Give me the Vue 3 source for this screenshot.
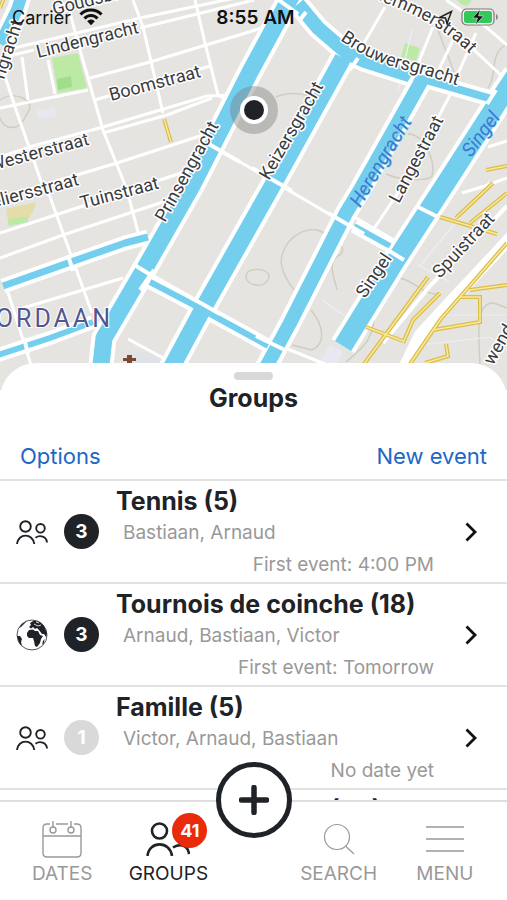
<script setup>
import { ref } from 'vue'

const activeTab = ref('groups')

const groups = [
  { id: 1, icon: 'people', count: 3, name: 'Tennis (5)', members: 'Bastiaan, Arnaud', next: 'First event: 4:00 PM' },
  { id: 2, icon: 'globe', count: 3, name: 'Tournois de coinche (18)', members: 'Arnaud, Bastiaan, Victor', next: 'First event: Tomorrow' },
  { id: 3, icon: 'people', count: 1, muted: true, name: 'Famille (5)', members: 'Victor, Arnaud, Bastiaan', next: 'No date yet' },
  { id: 4, icon: 'people', count: 1, muted: true, name: 'vacances en mer (24)', members: 'Victor, Bastiaan', next: 'No date yet' }
]

// canals, each with a quay on both sides
const canals = [
  { d: 'M302 -22 L288 2 L250 72 L193 184 L145 268 L104 338 L98 392', w: 17 },
  { d: 'M298 4 L318 28 L347 53 L365 61 L412 76', w: 14 },
  { d: 'M412 76 L492 99', w: 8 },
  { d: 'M343 58 L270 190 L205 305 L162 385', w: 17 },
  { d: 'M423 78 L360 190 L346 213 L290 323 L258 382', w: 14 },
  { d: 'M516 75 L500 99 L446 183 L396 260 L343 346', w: 19 },
  { d: 'M3 286 L68 263 L125 243 L148 237', w: 7 },
  { d: 'M-5 356 L50 338 L93 322', w: 6 },
  { d: 'M150 282 L192 304 L254 338 L268 346', w: 6 },
  { d: 'M354 226 L390 246', w: 6 },
  { d: 'M24 -12 L17 10 L0 44', w: 12 }
]

const streets = [
  'M0 58 L34 50', 'M10 49 L140 18 L235 -2', 'M140 28 L254 0', 'M90 78 L150 62 L262 28',
  'M95 100 L210 66', 'M0 108 L88 90', 'M0 157 L33 146 L103 127 L167 108 L207 96 L230 95',
  'M103 133 L167 115 L212 98', 'M0 198 L60 180 L117 163 L203 135', 'M0 233 L80 207 L187 171',
  'M0 258 L63 235 L163 202', 'M23 308 L123 278', 'M3 70 L15 107 L43 187 L50 197 L92 313',
  'M70 13 L80 50 L103 130 L127 190 L138 232', 'M133 0 L143 27 L163 113',
  'M195 0 L205 43 L218 95 L226 100', 'M22 57 L28 100', 'M48 60 L55 94', 'M5 283 L31 365',
  'M207 143 L254 170 L336 218 L353 228 L404 260', 'M133 264 L196 300 L254 335 L290 350 L335 368',
  'M128 339 L165 359', 'M385 7 L353 62', 'M433 27 L413 76', 'M453 40 L433 82', 'M476 33 L450 92',
  'M450 95 L400 190 L373 230', 'M356 218 L394 240', 'M446 0 L486 27 L507 45', 'M380 -4 L430 20 L472 48 L506 80',
  'M418 207 L438 217', 'M462 193 L485 186 L507 178', 'M488 147 L507 141', 'M281 0 L298 14'
]

const yellowRoads = [
  'M364 364 L428 277', 'M403 343 L413 320 L440 293', 'M410 364 L440 320 L507 243',
  'M433 330 L480 322 L480 297 L460 297', 'M470 290 L507 285', 'M366 327 L403 341',
  'M440 217 L497 234', 'M456 218 L493 183', 'M470 223 L507 193', 'M486 170 L507 166',
  'M446 344 L448 356 L425 363', 'M164 119 L171 142', 'M0 8 L4 -2'
]

const paths = [
  'M337 290 C335 278 325 262 341 254 C348 246 330 236 320 231 C306 226 290 236 284 250 C278 262 282 274 294 290',
  'M253 270 C262 268 272 272 268 280 C262 290 245 284 246 276 C247 271 250 270 253 270',
  'M311 310 C324 326 326 344 312 350 L292 345', 'M399 278 C414 280 424 296 440 294',
  'M374 310 C376 340 360 350 346 362', 'M276 97 C288 92 300 93 310 96',
  'M0 100 C14 90 34 100 29 110 C24 120 20 130 8 127 C2 124 0 120 -2 112',
  'M438 30 L454 72', 'M408 134 C424 134 436 160 432 176 C426 182 400 180 386 174',
  'M507 44 C488 54 498 76 488 88', 'M480 364 C478 330 476 302 494 303 L507 308'
]

const labels = [
  { text: 'Goudsbloem', x: 54, y: 15, r: -14 },
  { text: 'Lindengracht', x: 38, y: 58, r: -14 },
  { text: 'Boomstraat', x: 111, y: 101, r: -15 },
  { text: 'Westerstraat', x: -9, y: 171, r: -15 },
  { text: 'Tuinstraat', x: 82, y: 209, r: -15 },
  { text: 'Prinsengracht', x: 165, y: 223, r: -61 },
  { text: 'Keizersgracht', x: 269, y: 181, r: -60 },
  { text: 'Langestraat', x: 399, y: 204, r: -62 },
  { text: 'Singel', x: 365, y: 299, r: -56 },
  { text: 'Spuistraat', x: 440, y: 279, r: -47 },
  { text: 'ngracht', x: 4, y: 80, r: -72 },
  { text: 'eliersstraat', x: -7, y: 208, r: -15 },
  { text: 'wend', x: 493, y: 366, r: -60 }
]
</script>

<template>
  <div class="screen">
    <section class="map">
      <svg class="map-canvas" viewBox="0 0 507 390" preserveAspectRatio="xMidYMin slice" role="img" aria-label="Map of Amsterdam">
        <rect width="507" height="390" fill="#e5e4e1" />
        <path d="M52 58 L78 53 L87 88 L58 93 Z" fill="#bceaa4" />
        <path d="M57 79 L71 76 L72 87 L58 90 Z" fill="#a0de8c" />
        <path d="M6 209 L36 202 L34 210 L28 219 L9 226 Z" fill="#e4dca9" />
        <path d="M8 219 L28 217 L28 222 L9 226 Z" fill="#bceaa4" />
        <path d="M405 43 L420 48 L416 61 L401 57 Z" fill="#bceaa4" />
        <path d="M457 0 L472 0 L467 6 L461 4 Z" fill="#bceaa4" />
        <path d="M36 111 L55 107 L56 116 L37 119 Z M330 344 L343 352 L336 365 L318 365 Z" fill="#e8e8f0" />
        <path d="M135 354 L150 350 L160 357 L158 368 L130 368 Z" fill="#dfe3e8" />
        <g fill="none" stroke="#cdcdc0" stroke-width="1.4">
          <path v-for="d in paths" :key="d" :d="d" />
        </g>
        <g fill="none" stroke="#eeeef5" stroke-width="1.2">
          <path d="M420 266 L490 180 M418 265 L450 282 M322 300 L345 316 M445 315 L507 315 M420 345 L490 337 L507 350 M398 90 L412 30" />
        </g>
        <g fill="none" stroke="#fff" stroke-width="3">
          <path v-for="d in streets" :key="d" :d="d" />
        </g>
        <g fill="none" stroke="#fff" stroke-linejoin="round">
          <path v-for="c in canals" :key="c.d" :d="c.d" :stroke-width="c.w + 8" />
        </g>
        <g fill="none" stroke="#74cfee" stroke-linejoin="round">
          <path v-for="c in canals" :key="c.d" :d="c.d" :stroke-width="c.w" />
        </g>
        <!-- bridges -->
        <path
          d="M276 -2 L298 14 M300 20 L306 12 M358 58 L350 70 M408 85 L416 72 M207 143 L240 162 M252 168 L292 191 M328 213 L364 234 M386 249 L404 260 M133 264 L154 277 M190 297 L220 314 M256 336 L287 351 M418 207 L438 217 M68 255 L73 271 M24 338 L28 354 M487 104 L496 90 M140 290 L154 270"
          fill="none"
          stroke="#fff"
          stroke-width="4"
        />
        <path d="M383 343 L430 286 L507 206" fill="none" stroke="#fff" stroke-width="4" />
        <path d="M512 236 L453 299 L420 335 L402 372" fill="none" stroke="#fff" stroke-width="12" />
        <g fill="none" stroke="#dcbd45" stroke-width="4">
          <path v-for="d in yellowRoads" :key="d" :d="d" />
        </g>
        <g fill="none" stroke="#f8e9a0" stroke-width="1.5">
          <path v-for="d in yellowRoads" :key="d" :d="d" />
        </g>
        <path d="M127 355 h5 v3 h4 v3 h-4 v8 h-5 v-8 h-4 v-3 h4 Z" fill="#7a4b32" />

        <g class="street-label">
          <text v-for="l in labels" :key="l.text + l.x" :transform="`translate(${l.x} ${l.y}) rotate(${l.r})`">{{ l.text }}</text>
          <path id="brouwers" d="M340 40 Q374 64 410 71 Q440 79 475 92" fill="none" stroke="none" />
          <text><textPath href="#brouwers">Brouwersgracht</textPath></text>
          <path id="haarlemmer" d="M320 -32 L385 3 Q435 20 470 54" fill="none" stroke="none" />
          <text text-anchor="end"><textPath href="#haarlemmer" startOffset="100%">Haarlemmerstraat</textPath></text>
        </g>
        <g class="water-label">
          <text transform="translate(360 208) rotate(-59)">Herengracht</text>
          <text transform="translate(471 158) rotate(-54)">Singel</text>
        </g>
        <text class="district-label" x="-21" y="327">JORDAAN</text>

        <circle cx="254" cy="110" r="24" fill="#777" fill-opacity="0.4" />
        <circle cx="254" cy="110" r="14" fill="#fff" />
        <circle cx="254" cy="110" r="10" fill="#1f2226" />
      </svg>

      <div class="status-bar">
        <span class="carrier">
          Carrier
          <svg width="24" height="18" viewBox="0 0 24 18" aria-hidden="true">
            <g fill="none" stroke="#111" stroke-width="3">
              <path d="M1.500 6.500 C7 0.500 17 0.500 22.500 6.500" />
              <path d="M5.500 10.500 C9 6.500 15 6.500 18.500 10.500" />
            </g>
            <path d="M8.200 13.200 C10.500 11 13.500 11 15.800 13.200 L12 17.200 Z" fill="#111" />
          </svg>
        </span>
        <time class="clock">8:55 AM</time>
        <span class="power">
          <svg width="15" height="15" viewBox="0 0 15 15" aria-hidden="true">
            <path d="M13.500 1.500 L1.500 7.500 L7.500 8 L9 13.500 Z" fill="none" stroke="#222" stroke-width="1.500" />
          </svg>
          <svg width="38" height="18" viewBox="0 0 38 18" aria-hidden="true">
            <rect x="1" y="1" width="32" height="16" rx="4.500" fill="#fff" fill-opacity="0.5" stroke="#777" stroke-width="1.200" />
            <rect x="3" y="3" width="28" height="12" rx="2.500" fill="#34c759" />
            <path d="M35 6 C37.500 7 37.500 11 35 12 Z" fill="#888" />
            <path d="M19.500 1 L11.500 10 L16.500 10 L14.500 17 L22.500 8 L17.500 8 Z" fill="#111" stroke="#fff" stroke-width="0.500" />
          </svg>
        </span>
      </div>
    </section>

    <main class="sheet">
      <div class="grabber"></div>
      <h1 class="title">Groups</h1>
      <div class="toolbar">
        <button class="link-btn" type="button">Options</button>
        <button class="link-btn" type="button">New event</button>
      </div>

      <ul class="group-list">
        <li v-for="g in groups" :key="g.id">
          <button class="group-row" type="button">
            <svg v-if="g.icon === 'people'" class="row-icon" viewBox="0 0 32 24" aria-hidden="true">
              <g fill="none" stroke="#1f2226" stroke-width="1.900">
                <circle cx="9.500" cy="6.500" r="5.300" />
                <path d="M1 24 C2 12.800 17 12.800 18.300 24" />
                <circle cx="24.500" cy="8.300" r="4.300" />
                <path d="M19.500 17.800 C24 14.500 30.500 16.500 31 22.500" />
              </g>
            </svg>
            <svg v-else class="row-icon globe" viewBox="0 0 32 32" aria-hidden="true">
              <circle cx="16" cy="16" r="15" fill="#fff" stroke="#555" stroke-width="1" />
              <g fill="#1f2226">
                <path d="M11 14 L13 11 L17 10.500 L19 12 L22 12 L24 16 L27 17 L25 20 L24 24 L21 28 L19 27 L18 22 L17 19 L13 19 L11 17 Z" />
                <path d="M13 8 L15 6 L14 4 L18 1.500 L24 3 L28 7 L31 14 L30 18 L28 15 L26 15 L23 11 L21 9 L19 10 L17 8 L15 9.500 Z" />
                <path d="M1 17 L4 17 L6 20 L5 23 L6 27 L3 24 Z" />
                <path d="M3 9 L6 5 L11 2 L8 5 L5 8 Z" />
                <path d="M27 22 L28.500 20 L28 24 L26 26 Z" />
              </g>
              <path d="M18 5 L22 7 L25 6 M20 3 L23 4" fill="none" stroke="#fff" stroke-width="0.800" />
            </svg>
            <span class="count" :class="{ muted: g.muted }">{{ g.count }}</span>
            <span class="info">
              <span class="name">{{ g.name }}</span>
              <span class="members">{{ g.members }}</span>
              <span class="next">{{ g.next }}</span>
            </span>
            <svg class="chevron" viewBox="0 0 12 20" aria-hidden="true">
              <path d="M1.500 1.500 L10 10 L1.500 18.500" fill="none" stroke="#111" stroke-width="2.800" />
            </svg>
          </button>
        </li>
      </ul>
    </main>

    <nav class="tab-bar">
      <button class="tab" :class="{ active: activeTab === 'dates' }" type="button" @click="activeTab = 'dates'">
        <span class="tab-icon">
          <svg width="40" height="38" viewBox="0 0 40 38" aria-hidden="true">
            <g fill="none" stroke="currentColor" stroke-width="1.400">
              <path d="M8 4 H5 Q1 4 1 8 V33 Q1 37 5 37 H35 Q39 37 39 33 V8 Q39 4 35 4 H32 M14 4 H26 M1 16 H39" />
              <path d="M11 1 V7 M29 1 V7" />
              <circle cx="11" cy="10" r="3" />
              <circle cx="29" cy="10" r="3" />
            </g>
          </svg>
        </span>
        <span>DATES</span>
      </button>
      <button class="tab" :class="{ active: activeTab === 'groups' }" type="button" @click="activeTab = 'groups'">
        <span class="tab-icon">
          <svg width="44" height="34" viewBox="0 0 44 34" aria-hidden="true">
            <g fill="none" stroke="currentColor" stroke-width="2.600">
              <circle cx="13.500" cy="9" r="7.500" />
              <path d="M1.500 34 C3 18.500 24 18.500 26 34" />
              <circle cx="34" cy="12" r="6" />
              <path d="M27 25.500 C34 21 42 23 43 32" />
            </g>
          </svg>
          <span class="badge">41</span>
        </span>
        <span>GROUPS</span>
      </button>
      <button class="add-btn" type="button" aria-label="Add">
        <svg width="30" height="30" viewBox="0 0 30 30" aria-hidden="true">
          <path d="M15 2.500 V27.500 M2.500 15 H27.500" stroke="#1f2226" stroke-width="5.500" stroke-linecap="round" />
        </svg>
      </button>
      <button class="tab" :class="{ active: activeTab === 'search' }" type="button" @click="activeTab = 'search'">
        <span class="tab-icon">
          <svg width="32" height="32" viewBox="0 0 32 32" aria-hidden="true">
            <g fill="none" stroke="currentColor" stroke-width="1.200">
              <circle cx="14" cy="14" r="12.500" />
              <path d="M22.500 23 L31 31" />
            </g>
          </svg>
        </span>
        <span>SEARCH</span>
      </button>
      <button class="tab" :class="{ active: activeTab === 'menu' }" type="button" @click="activeTab = 'menu'">
        <span class="tab-icon">
          <svg width="38" height="28" viewBox="0 0 38 28" aria-hidden="true">
            <path d="M0 2 H38 M0 14 H38 M0 26 H38" stroke="currentColor" stroke-width="1.500" />
          </svg>
        </span>
        <span>MENU</span>
      </button>
    </nav>
  </div>
</template>

<style>
body {
  margin: 0;
  background: #fff;
}
</style>

<style scoped>
.screen {
  display: flex;
  flex-direction: column;
  height: 100vh;
  overflow: hidden;
  font-family: Inter, 'Liberation Sans', sans-serif;
  color: #1f2226;
  background: #fff;
}

button {
  padding: 0;
  border: none;
  background: none;
  font-family: inherit;
  color: inherit;
  cursor: pointer;
}

.map {
  position: relative;
  flex: none;
}
.map-canvas {
  display: block;
  width: 100%;
}

.street-label,
.water-label {
  font-family: Roboto, sans-serif;
  font-size: 18px;
  fill: #3b3b3e;
  stroke: #fff;
  stroke-width: 3px;
  stroke-linejoin: round;
  paint-order: stroke;
}
.water-label {
  font-size: 19px;
  font-style: italic;
  fill: #3f78cf;
  stroke: #74cfee;
  stroke-width: 1px;
}
.district-label {
  font-family: Roboto, sans-serif;
  font-size: 25px;
  letter-spacing: 3px;
  fill: #4f5690;
  stroke: #fff;
  stroke-width: 2px;
  paint-order: stroke;
}

.status-bar {
  position: absolute;
  top: 0;
  left: 0;
  right: 0;
  display: grid;
  grid-template-columns: 1fr auto 1fr;
  align-items: center;
  height: 34px;
  padding: 0 8px 0 12px;
  font-size: 18px;
  color: #111;
}
.carrier,
.power {
  display: flex;
  align-items: center;
  gap: 8px;
}
.power {
  justify-content: flex-end;
}
.clock {
  font-size: 19px;
  font-weight: 600;
}

.sheet {
  position: relative;
  display: flex;
  flex-direction: column;
  flex: 1;
  min-height: 0;
  margin-top: -27px;
  border-radius: 36px 36px 0 0;
  background: #fff;
  overflow: hidden;
}
.grabber {
  flex: none;
  width: 39px;
  height: 8px;
  margin: 9px auto 0;
  border-radius: 4px;
  background: #d8d8d8;
}
.title {
  margin: 2px 0 0;
  font-size: 25px;
  line-height: 32px;
  font-weight: 700;
  text-align: center;
}
.toolbar {
  display: flex;
  justify-content: space-between;
  padding: 26px 20px 7px;
}
.link-btn {
  font-size: 22px;
  line-height: 32px;
  color: #2166c5;
}

.group-list {
  flex: 1;
  min-height: 0;
  margin: 0;
  padding: 0;
  list-style: none;
  overflow: hidden;
}
.group-row {
  display: flex;
  align-items: center;
  box-sizing: border-box;
  width: 100%;
  padding: 0 30px 0 16px;
  border-top: 2px solid #e2e2e2;
  text-align: left;
}
.row-icon {
  flex: none;
  width: 32px;
  height: 24px;
}
.row-icon.globe {
  height: 32px;
}
.count {
  flex: none;
  width: 35px;
  margin: 0 17px 0 16px;
  border-radius: 50%;
  font-size: 19px;
  line-height: 35px;
  font-weight: 700;
  text-align: center;
  color: #fff;
  background: #1f2226;
}
.count.muted {
  background: #d9d9d9;
}
.info {
  display: flex;
  flex-direction: column;
  flex: 1;
  min-width: 0;
  padding: 4px 0 1px;
  line-height: 32px;
}
.name {
  font-size: 25px;
  font-weight: 700;
  white-space: nowrap;
}
.members,
.next {
  font-size: 19px;
  color: #999;
}
.members {
  padding-left: 7px;
}
.next {
  text-align: right;
}
.chevron {
  flex: none;
  width: 12px;
  height: 20px;
  margin-left: 31px;
}

.tab-bar {
  position: relative;
  display: grid;
  grid-template-columns: 1fr 1fr 64px 1fr 1fr;
  flex: none;
  height: 98px;
  padding: 0 9px;
  border-top: 2px solid #dedede;
  background: #fff;
}
.tab {
  display: flex;
  flex-direction: column;
  align-items: center;
  justify-content: flex-end;
  padding-bottom: 14px;
  font-size: 19px;
  line-height: 24px;
  color: #999;
}
.tab.active {
  color: #1f2226;
}
.tab:nth-of-type(4) {
  grid-column: 4;
}
.tab-icon {
  position: relative;
  display: flex;
  align-items: center;
  height: 38px;
  margin-bottom: 4px;
}
.badge {
  position: absolute;
  top: -7px;
  right: -17px;
  width: 35px;
  border-radius: 50%;
  font-size: 18px;
  line-height: 35px;
  font-weight: 700;
  text-align: center;
  color: #fff;
  background: #e92b0c;
}
.add-btn {
  position: absolute;
  top: -40px;
  left: 50%;
  display: flex;
  align-items: center;
  justify-content: center;
  width: 76px;
  height: 76px;
  margin-left: -38px;
  border: 5px solid #1f2226;
  border-radius: 50%;
  background: #fff;
}
</style>
